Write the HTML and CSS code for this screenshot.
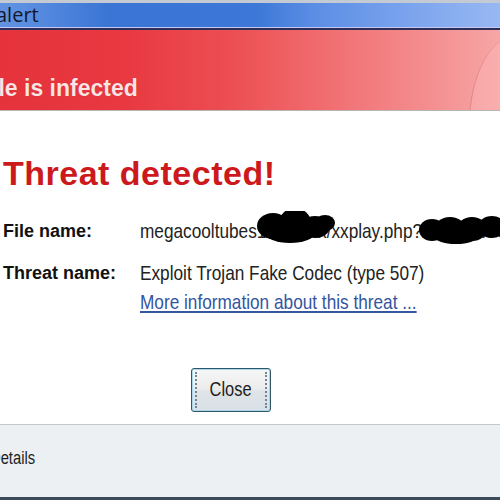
FILE: index.html
```html
<!DOCTYPE html>
<html>
<head>
<meta charset="utf-8">
<link rel="stylesheet" href="styles.css">
</head>
<body>
<div class="window">
  <div class="titlebar"><span class="title">alert</span></div>
  <div class="banner">
    <span class="banner-text">File is infected</span>
    <div class="banner-shape"></div>
  </div>
  <div class="content">
    <h1 class="headline">Threat detected!</h1>
    <div class="details">
      <div class="label">File name:</div>
      <div class="value">
        <span class="narrow">megacooltubes1xxxxxxx/xxplay.php?xxxxxxxx</span>
        <svg class="blot" width="400" height="40" viewBox="0 0 400 40">
          <g fill="#000">
            <ellipse cx="133" cy="15" rx="16" ry="13"/>
            <ellipse cx="155" cy="12" rx="16" ry="15"/>
            <ellipse cx="175" cy="16" rx="15" ry="11"/>
            <ellipse cx="185" cy="12" rx="10" ry="8"/>
            <ellipse cx="150" cy="22" rx="25" ry="10"/>
            <ellipse cx="292" cy="19" rx="13" ry="11"/>
            <ellipse cx="310" cy="19" rx="16" ry="13"/>
            <ellipse cx="332" cy="18" rx="15" ry="12"/>
            <ellipse cx="352" cy="16" rx="14" ry="11"/>
            <ellipse cx="368" cy="18" rx="12" ry="11"/>
            <ellipse cx="316" cy="25" rx="22" ry="8"/>
          </g>
        </svg>
      </div>
      <div class="label">Threat name:</div>
      <div class="value"><span class="narrow">Exploit Trojan Fake Codec (type 507)</span></div>
      <div class="label link-row"></div>
      <div class="value link-row"><a class="more narrow" href="#">More information about this threat ...</a></div>
    </div>
    <div class="actions">
      <button class="btn"><span class="btn-focus"><span class="narrow">Close</span></span></button>
    </div>
  </div>
  <div class="footer"><span class="footer-text narrow">Details</span></div>
</div>
</body>
</html>
```

FILE: styles.css
```css
html, body {
  margin: 0;
  padding: 0;
  width: 500px;
  height: 500px;
  overflow: hidden;
  background: #ffffff;
}

.window {
  margin-left: -40px;
  width: 540px;
  height: 500px;
  display: flex;
  flex-direction: column;
  background: #ffffff;
}

.titlebar {
  height: 29px;
  border-top: 3px solid #c3cad4;
  border-bottom: 1px solid #c6c8f2;
  background: linear-gradient(90deg, #6e9ce4 0%, #5a8ee0 12%, #3a74d4 28%, #3d78d8 55%, #5a8de4 65%, #7ea6ee 85%, #98b8f2 100%);
  padding-left: 36px;
  box-sizing: content-box;
}

.title {
  font-family: "Open Sans", "Noto Sans", sans-serif;
  font-size: 20px;
  line-height: 24px;
  color: #14182a;
  display: block;
}

.banner {
  position: relative;
  height: 98px;
  border-top: 2px solid #2c2f5a;
  border-bottom: 1px solid #b5b5b8;
  background: linear-gradient(90deg, #e5313a 0%, #e83840 30%, #ec4e52 50%, #f27a7c 75%, #f59798 92%, #f7a6a6 100%);
  padding-left: 18px;
  padding-top: 45px;
  box-sizing: border-box;
  overflow: hidden;
}

.banner-text {
  font-family: "Liberation Sans", Arial, sans-serif;
  font-weight: bold;
  font-size: 23px;
  line-height: 26px;
  color: #fbe4e4;
  text-shadow: 0 0 1px rgba(120, 0, 0, 0.4);
}

.banner-shape {
  position: absolute;
  right: -70px;
  top: 4px;
  width: 100px;
  height: 180px;
  border-radius: 50%;
  border-left: 1px solid rgba(160, 80, 80, 0.35);
  background: rgba(255, 190, 190, 0.35);
}

.content {
  flex: 1;
  padding-top: 42px;
}

.headline {
  margin: 0;
  padding-left: 43px;
  font-family: "Liberation Sans", Arial, sans-serif;
  font-weight: bold;
  font-size: 34px;
  line-height: 40px;
  color: #cc1a1c;
  letter-spacing: 0.5px;
}

.details {
  margin-top: 27px;
  display: grid;
  grid-template-columns: 137px auto;
  padding-left: 43px;
  row-gap: 20px;
}

.label {
  font-family: "Liberation Sans", Arial, sans-serif;
  font-weight: bold;
  font-size: 18px;
  line-height: 22px;
  color: #111111;
}

.value {
  position: relative;
  font-family: "Liberation Sans", Arial, sans-serif;
  font-size: 21px;
  line-height: 22px;
  color: #222222;
  white-space: nowrap;
}

.narrow {
  display: inline-block;
  transform: scaleX(0.82);
  transform-origin: left center;
  white-space: nowrap;
}

.link-row {
  margin-top: -13px;
}

.blot {
  position: absolute;
  left: 0;
  top: -9px;
}

.more {
  color: #34559f;
  text-decoration: underline;
  text-underline-offset: 2px;
}

.actions {
  margin-top: 55px;
  padding-left: 231px;
}

.btn {
  display: block;
  width: 80px;
  height: 44px;
  padding: 3px;
  border: 1px solid #2f5768;
  border-radius: 3px;
  box-shadow: inset 0 0 0 1px #a8d6ea;
  background: linear-gradient(180deg, #f6f6f6 0%, #ececec 48%, #dfe4e8 52%, #d9e1e6 100%);
  box-sizing: border-box;
}

.btn-focus {
  display: flex;
  align-items: center;
  justify-content: center;
  height: 100%;
  border-left: 2px dotted #6d8796;
  border-right: 2px dotted #6d8796;
  font-family: "Liberation Sans", Arial, sans-serif;
  font-size: 20px;
  color: #1e1e1e;
}

.btn-focus .narrow {
  transform-origin: center center;
}

.footer {
  height: 73px;
  margin-top: 12px;
  border-top: 1px solid #c4c7cc;
  border-bottom: 3px solid #3d4a5c;
  background: #edf0f3;
  padding-left: 30px;
  padding-top: 22px;
  box-sizing: content-box;
}

.footer-text {
  font-family: "Liberation Sans", Arial, sans-serif;
  font-size: 18px;
  line-height: 22px;
  color: #1e1e1e;
}
```
